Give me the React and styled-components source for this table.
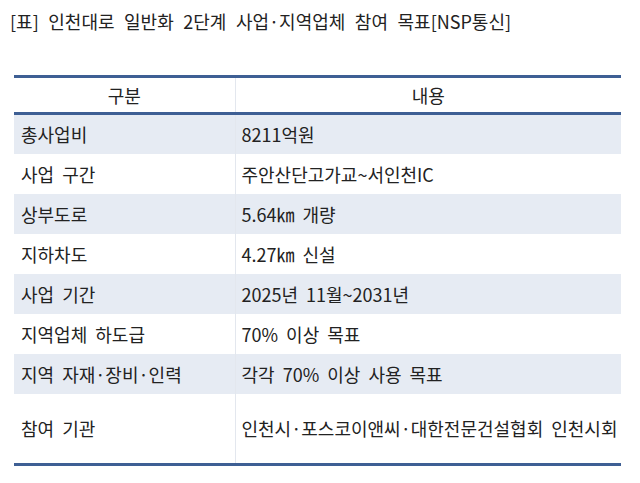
import React from "react";
import styled, { createGlobalStyle } from "styled-components";

const Global = createGlobalStyle`
  html, body { margin: 0; padding: 0; background: #ffffff; }
  body { font-family: "Noto Sans CJK KR", "Noto Sans", sans-serif; color: #1f1f1f; }
`;

const Page = styled.div`
  width: 640px;
  height: 483px;
  padding: 8px 0 0 0;
  box-sizing: border-box;
  overflow: hidden;
`;

const Title = styled.div`
  margin-left: 10px;
  font-size: 18px;
  line-height: 26px;
  height: 26px;
  color: #222;
  word-spacing: 5.5px;
`;

const Table = styled.table`
  margin: 41px 0 0 14px;
  width: 607px;
  border-collapse: collapse;
  table-layout: fixed;
  border-top: 3px solid #3e5f94;
  border-bottom: 3px solid #3e5f94;
  font-size: 18px;
  color: #222;
`;

const HeadRow = styled.tr`
  height: 37px;
  border-bottom: 3px solid #3e5f94;
`;

const HeadCell = styled.th`
  font-weight: 400;
  text-align: center;
  padding: 0;
  border-left: ${(p) => (p.$divider ? "1px solid #e3e7ee" : "none")};
`;

const Row = styled.tr`
  height: ${(p) => (p.$tall ? "71px" : "40px")};
  background: ${(p) => (p.$shaded ? "#e6ebf3" : "#ffffff")};
`;

const Cell = styled.td`
  padding: 0 0 0 ${(p) => (p.$divider ? "6px" : "7px")};
  white-space: nowrap;
  word-spacing: 4px;
  border-left: ${(p) => (p.$divider ? "1px solid #e3e7ee" : "none")};
`;

const rows = [
  ["총사업비", "8211억원"],
  ["사업 구간", "주안산단고가교~서인천IC"],
  ["상부도로", "5.64㎞ 개량"],
  ["지하차도", "4.27㎞ 신설"],
  ["사업 기간", "2025년 11월~2031년"],
  ["지역업체 하도급", "70% 이상 목표"],
  ["지역 자재·장비·인력", "각각 70% 이상 사용 목표"],
  ["참여 기관", "인천시·포스코이앤씨·대한전문건설협회 인천시회"],
];

export default function App() {
  return (
    <Page>
      <Global />
      <Title>[표] 인천대로 일반화 2단계 사업·지역업체 참여 목표[NSP통신]</Title>
      <Table>
        <colgroup>
          <col style={{ width: "221px" }} />
          <col />
        </colgroup>
        <thead>
          <HeadRow>
            <HeadCell>구분</HeadCell>
            <HeadCell $divider>내용</HeadCell>
          </HeadRow>
        </thead>
        <tbody>
          {rows.map(([k, v], i) => (
            <Row key={k} $shaded={i % 2 === 0 && i < 7} $tall={i === 7}>
              <Cell>{k}</Cell>
              <Cell $divider>{v}</Cell>
            </Row>
          ))}
        </tbody>
      </Table>
    </Page>
  );
}
